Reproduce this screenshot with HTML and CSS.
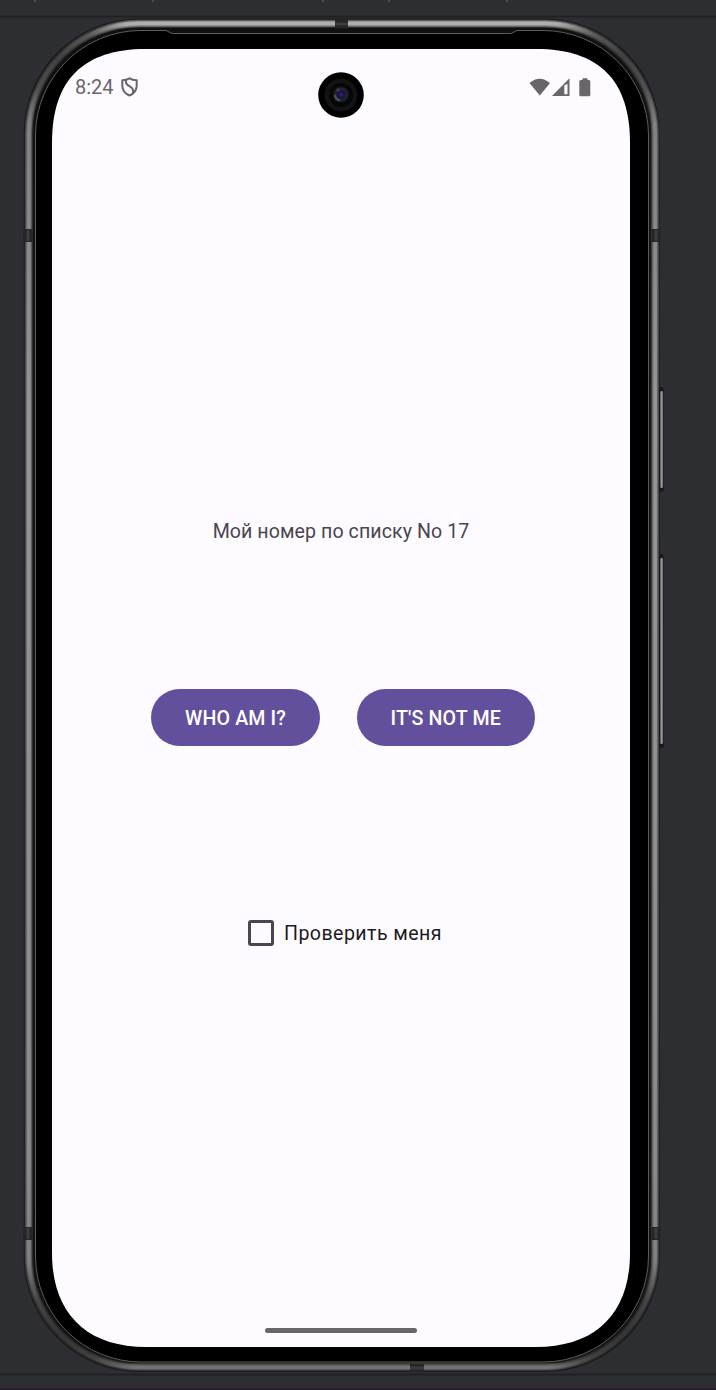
FILE: index.html
```html
<!DOCTYPE html>
<html lang="ru">
<head>
<meta charset="utf-8">
<title>Phone preview</title>
<link rel="stylesheet" href="styles.css">
</head>
<body>
<main class="stage">
  <svg class="device" viewBox="0 0 716 1390" aria-hidden="true">
    <defs>
      <linearGradient id="metal" gradientUnits="userSpaceOnUse" x1="0" y1="20" x2="0" y2="1370">
        <stop offset="0" stop-color="#b0b0b0"/><stop offset=".08" stop-color="#828282"/><stop offset=".3" stop-color="#979797"/><stop offset=".85" stop-color="#8b8b8b"/><stop offset="1" stop-color="#737373"/>
      </linearGradient>
      <radialGradient id="shade"><stop offset="0" stop-color="#171717" stop-opacity=".7"/><stop offset=".5" stop-color="#171717" stop-opacity=".55"/><stop offset="1" stop-color="#171717" stop-opacity="0"/></radialGradient>
      <linearGradient id="key"><stop offset="0" stop-color="#222"/><stop offset=".45" stop-color="#999"/><stop offset=".8" stop-color="#777"/><stop offset="1" stop-color="#222"/></linearGradient>
      <clipPath id="ring"><path clip-rule="evenodd" d="M139 18.5H545A115 115 0 0 1 660 133.500V1257A115 115 0 0 1 545 1372H139A115 115 0 0 1 24 1257V133.500A115 115 0 0 1 139 18.500ZM141 28A107 107 0 0 0 34 135V1256A107 107 0 0 0 141 1363H543A107 107 0 0 0 650 1256V135A107 107 0 0 0 543 28Z"/></clipPath>
    </defs>
    <g class="divider"><path d="M0 16.5H716M0 1374.5H716"/></g>
    <path class="ticks" d="M35 0V2M153 0V2M323 0V2M389 0V2M507 0V2"/>
    <path class="footer-line" d="M0 1389H716"/>
    <rect x="658.5" y="387" width="5" height="105" rx="2.500" fill="#171717"/>
    <rect x="659.5" y="391" width="4" height="97" rx="2" fill="url(#key)"/>
    <rect x="658.5" y="554" width="5" height="194" rx="2.500" fill="#171717"/>
    <rect x="659.5" y="558" width="4" height="186" rx="2" fill="url(#key)"/>
    <rect class="case" x="23.7" y="18.5" width="636" height="1353.500" rx="115"/>
    <g fill="none" stroke="url(#metal)">
      <rect x="28.6" y="23.6" width="626.5" height="1343.500" rx="110" stroke-width="7.500" opacity=".42"/>
      <rect x="28.8" y="23.6" width="626.2" height="1343.500" rx="110" stroke-width="5.200" opacity=".6"/>
      <rect x="28.8" y="23.4" width="626.4" height="1344" rx="110" stroke-width="3.300"/>
    </g>
    <g clip-path="url(#ring)" fill="url(#shade)">
      <circle cx="57" cy="55" r="76"/><circle cx="627" cy="55" r="76"/><circle cx="57" cy="1338" r="82"/><circle cx="627" cy="1338" r="82"/>
    </g>
    <rect x="33.500" y="28" width="616.500" height="1334.500" rx="106" fill="#101010"/>
    <path class="glass" d="M35.500 135A105.500 105 0 0 1 141 30.500H166L172 33.500H511L517 30.500H543A105.500 105 0 0 1 648.500 135V1256A105.500 106 0 0 1 543 1362H141A105.500 106 0 0 1 35.500 1256Z"/>
    <path fill="#252525" d="M335 18.500h13v10h-13zM410 1364h14v8h-14zM23.500 229h9v13h-9zM651.500 229h9v13h-9zM23.500 1227h9v13h-9zM651.500 1227h9v13h-9z"/>
    <path class="band-light" d="M335 24H348M410 1368H424M28 230V241M656 230V241M28 1228V1239M656 1228V1239"/>
    <path class="display" d="M146 49H536C599 49 630 80 630 143V1253C630 1313 596 1347 536 1347H146C86 1347 52 1313 52 1253V143C52 80 83 49 146 49Z"/>
  </svg>
  <section class="screen">
    <header class="status">
      <div class="clock"><span>8:24</span>
        <svg width="17" height="20" viewBox="0 0 17 20"><path class="shield" d="M8.5 1.3C6.4 2.7 3.8 3.2 1.3 3.2V8.500C1.3 13.2 4.2 16.7 8.500 18.500C12.8 16.7 15.7 13.2 15.7 8.500V3.2C13.2 3.2 10.6 2.7 8.500 1.3ZM5 2.8V5.2C5 9.1 12 9.2 12 13.3V15.7"/></svg>
      </div>
      <svg class="lens" viewBox="0 0 46 46">
        <defs><radialGradient id="glass"><stop offset="0" stop-color="#3c2584"/><stop offset=".35" stop-color="#171044"/><stop offset=".7" stop-color="#22272e"/><stop offset="1" stop-color="#090909"/></radialGradient></defs>
        <circle cx="23" cy="23" r="22.8"/><circle cx="23" cy="23" r="16.500" fill="#121212"/><circle cx="23" cy="23" r="12" fill="#070707"/><circle cx="23" cy="22.500" r="8.500" fill="url(#glass)"/><path d="M17 24Q18 28 21 28" fill="none" stroke="#596b70" stroke-width="2.400" stroke-linecap="round" opacity=".65"/><circle cx="20" cy="18" r="1.800" fill="#495058" opacity=".6"/>
      </svg>
      <svg class="signals" viewBox="0 0 63 20" fill="#69666b"><path d="M.5 5Q10.500-3.500 21 5L10.800 17.500Z"/><path fill-rule="evenodd" d="M23 18L40.500.3V18ZM35.300 7.500V16.300H38.500V6Q36.800 6.300 35.300 7.500Z"/><path d="M53.500 .3h5v1.600h1.300q1.500 0 1.500 1.500v13.300q0 1.500-1.500 1.500h-8q-1.500 0-1.500-1.500V3.400q0-1.500 1.500-1.500h1.700z"/></svg>
    </header>
    <p class="message"><span>Мой номер по списку No 17</span></p>
    <div class="actions"><button class="button who">WHO AM I?</button><button class="button not-me">IT'S NOT ME</button></div>
    <label class="check"><input class="box" type="checkbox"><span>Проверить меня</span></label>
    <div class="home"></div>
  </section>
</main>
</body>
</html>
```
FILE: styles.css
```css
* { box-sizing: border-box; }
body { margin: 0; background: #2d2e32; font-family: Roboto, sans-serif; }
.stage { display: grid; width: 716px; height: 1390px; overflow: hidden; }
.device, .screen { grid-area: 1 / 1; }
.device { width: 716px; height: 1390px; }
.divider { fill: none; stroke: #202125; stroke-width: 2; }
.ticks { stroke: #4b4c51; stroke-width: 2; }
.footer-line { stroke: #28202e; stroke-width: 2; }
.case { fill: #1b1b1b; }
.glass { fill: #000; stroke: #5d5d5b; stroke-width: 1; }
.band-light { fill: none; stroke: #3c3c3c; stroke-width: 3; }
.display { fill: #fdfbff; }
.screen { width: 578px; height: 1298px; margin: 49px 0 0 52px; display: flex; flex-direction: column; align-items: center; }
.status { width: 100%; height: 70px; display: grid; grid-template-columns: 243px 92px 243px; padding-top: 23px; color: #69666b; }
.clock { display: flex; align-items: flex-start; gap: 7px; padding: 3px 0 0 23px; font-size: 20px; line-height: 24px; }
.clock span { width: 39px; }
.clock svg { margin-top: 2px; }
.shield { fill: none; stroke: #69666b; stroke-width: 2; stroke-linejoin: round; }
.lens { width: 46px; height: 46px; justify-self: center; }
.signals { width: 63px; height: 20px; margin: 6px 0 0 142px; }
.message { margin: 398px 0 0; height: 30px; line-height: 30px; font-size: 19.6px; letter-spacing: .07px; color: #49464e; white-space: nowrap; }
.actions { display: flex; gap: 36.5px; margin: 142px 0 0 4px; }
.button { height: 57px; border: 0; border-radius: 28.5px; padding: 2px 0 0; background: #63509d; color: #fff; font: 500 19.6px/28px Roboto, sans-serif; letter-spacing: .15px; white-space: nowrap; }
.who { width: 169px; }
.not-me { width: 178.5px; }
.check { display: flex; align-items: center; gap: 10px; height: 30px; margin: 172px 0 0 8px; color: #1d1b20; font-size: 19.6px; letter-spacing: .43px; white-space: nowrap; }
.check span { padding-top: 1px; }
.box { appearance: none; width: 26px; height: 26px; margin: 0; border: 3px solid #49464f; border-radius: 3px; }
.home { width: 152px; height: 5px; margin-top: 380px; border-radius: 3px; background: #69666b; }
```
